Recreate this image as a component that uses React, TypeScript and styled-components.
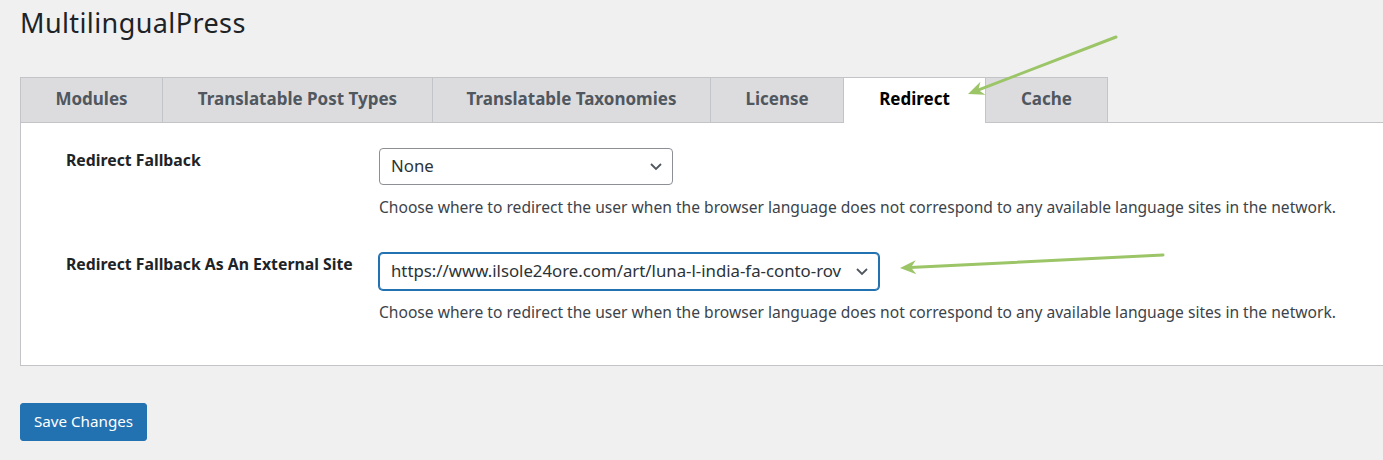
import React from "react";
import styled, { createGlobalStyle } from "styled-components";

const Global = createGlobalStyle`
  html, body { margin: 0; padding: 0; background: #f0f0f1; }
  body { font-family: "Noto Sans", "Open Sans", sans-serif; color: #3c434a; font-size: 14px; overflow: hidden; }
  * { box-sizing: border-box; }
`;

const Page = styled.div`
  position: relative;
  width: 1383px;
  height: 460px;
  overflow: hidden;
  padding: 6px 0 0 20px;
`;

const Title = styled.h1`
  margin: 0;
  font-size: 27px;
  line-height: 33px;
  letter-spacing: 0.4px;
  font-weight: 400;
  color: #1d2327;
`;

const TabBar = styled.nav`
  display: flex;
  margin-top: 38px;
  border-bottom: 1px solid #c3c4c7;
  margin-right: -20px;
`;

const Tab = styled.div<{ $w: number; $active?: boolean; $first?: boolean }>`
  width: ${(p) => p.$w}px;
  height: ${(p) => (p.$active ? 46 : 45)}px;
  margin-bottom: ${(p) => (p.$active ? -1 : 0)}px;
  display: flex;
  align-items: center;
  justify-content: center;
  border-top: 1px solid #c3c4c7;
  border-right: 1px solid #c3c4c7;
  border-left: ${(p) => (p.$first ? "1px solid #c3c4c7" : "none")};
  background: ${(p) => (p.$active ? "#fff" : "#dcdcde")};
  color: ${(p) => (p.$active ? "#000" : "#50575e")};
  font-size: 17px;
  font-weight: 700;
  padding-bottom: ${(p) => (p.$active ? 4 : 3)}px;
`;

const Panel = styled.div`
  background: #fff;
  border: 1px solid #c3c4c7;
  border-top: none;
  margin-right: -20px;
  padding: 25px 0 42px 45px;
  display: grid;
  grid-template-columns: 313px 1fr;
  row-gap: 35px;
`;

const Label = styled.div<{ $top?: number }>`
  font-size: 15.8px;
  font-weight: 700;
  color: #1d2327;
  line-height: 22px;
  padding-top: ${(p) => p.$top ?? 1}px;
`;

const Field = styled.div`
  display: flex;
  flex-direction: column;
  align-items: flex-start;
`;

const Select = styled.div<{ $w: number; $focus?: boolean }>`
  width: ${(p) => p.$w}px;
  height: 37px;
  border: 1px solid ${(p) => (p.$focus ? "#2271b1" : "#8c8f94")};
  box-shadow: ${(p) => (p.$focus ? "0 0 0 1px #2271b1" : "none")};
  border-radius: 4px;
  background: #fff;
  display: flex;
  align-items: center;
  padding: 0 8px 2px 11px;
  font-size: 16.8px;
  color: #2c3338;
  gap: 4px;
`;

const SelectText = styled.span`
  flex: 1;
  overflow: hidden;
  white-space: nowrap;
`;

const Desc = styled.p`
  margin: 11px 0 0;
  font-size: 15.6px;
  line-height: 22px;
  color: #3c434a;
`;

const SaveButton = styled.button`
  margin-top: 37px;
  height: 38px;
  width: 127px;
  padding: 0 0 3px;
  background: #2271b1;
  border: 1px solid #2271b1;
  border-radius: 3px;
  color: #fff;
  font-family: inherit;
  font-size: 15.2px;
`;

const Overlay = styled.svg`
  position: absolute;
  left: 0;
  top: 0;
  pointer-events: none;
`;

const Chevron = () => (
  <svg width="16" height="16" viewBox="0 0 16 16">
    <path d="M3 6 L8 11 L13 6" fill="none" stroke="#50575e" strokeWidth="1.8" />
  </svg>
);

function Arrow({ x1, y1, x2, y2 }: { x1: number; y1: number; x2: number; y2: number }) {
  const ang = (Math.atan2(y1 - y2, x1 - x2) * 180) / Math.PI;
  const rad = (ang * Math.PI) / 180;
  const lx = x2 + Math.cos(rad) * 10;
  const ly = y2 + Math.sin(rad) * 10;
  return (
    <g>
      <line x1={x1} y1={y1} x2={lx} y2={ly} stroke="#9bc566" strokeWidth="3" strokeLinecap="round" />
      <path
        d="M0 0 L16 -7 L11 0 L16 7 Z"
        fill="#9bc566"
        transform={`translate(${x2} ${y2}) rotate(${ang})`}
      />
    </g>
  );
}

const tabs = [
  { t: "Modules", w: 143 },
  { t: "Translatable Post Types", w: 270 },
  { t: "Translatable Taxonomies", w: 278 },
  { t: "License", w: 133 },
  { t: "Redirect", w: 142, active: true },
  { t: "Cache", w: 122 },
];

const desc =
  "Choose where to redirect the user when the browser language does not correspond to any available language sites in the network.";

export default function App() {
  return (
    <>
      <Global />
      <Page>
        <Title>MultilingualPress</Title>
        <TabBar>
          {tabs.map((t, i) => (
            <Tab key={t.t} $w={t.w} $active={t.active} $first={i === 0}>
              {t.t}
            </Tab>
          ))}
        </TabBar>
        <Panel>
          <Label>Redirect Fallback</Label>
          <Field>
            <Select $w={294}>
              <SelectText>None</SelectText>
              <Chevron />
            </Select>
            <Desc>{desc}</Desc>
          </Field>
          <Label $top={0}>Redirect Fallback As An External Site</Label>
          <Field>
            <Select $w={500} $focus>
              <SelectText>https://www.ilsole24ore.com/art/luna-l-india-fa-conto-rov</SelectText>
              <Chevron />
            </Select>
            <Desc>{desc}</Desc>
          </Field>
        </Panel>
        <SaveButton>Save Changes</SaveButton>
        <Overlay width="1383" height="460">
          <Arrow x1={1116} y1={37} x2={968} y2={94} />
          <Arrow x1={1163} y1={255} x2={900} y2={268} />
        </Overlay>
      </Page>
    </>
  );
}
